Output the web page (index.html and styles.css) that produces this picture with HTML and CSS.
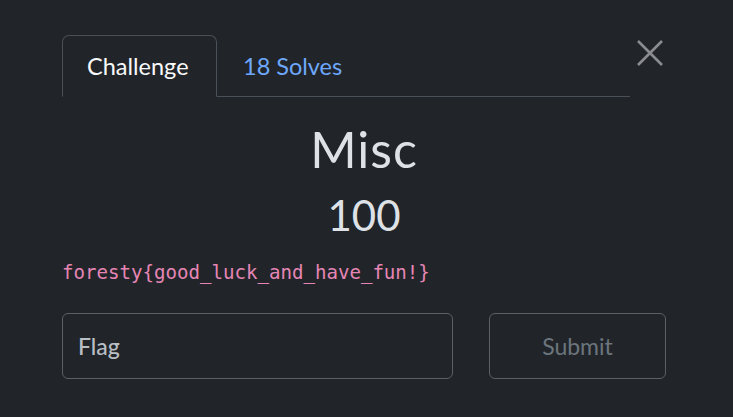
FILE: index.html
```html
<!DOCTYPE html>
<html>
<head>
<meta charset="utf-8">
<link rel="stylesheet" href="styles.css">
</head>
<body>
<div class="modal">
  <div class="header">
    <div class="tabs">
      <div class="tab active">Challenge</div>
      <div class="tab link">18 Solves</div>
    </div>
    <div class="close">
      <svg width="28" height="28" viewBox="0 0 28 28"><path d="M2 2 L26 26 M26 2 L2 26" stroke="#8a8c8f" stroke-width="2.6" fill="none"/></svg>
    </div>
  </div>
  <h1 class="name">Misc</h1>
  <div class="value">100</div>
  <div class="desc"><code>foresty{good_luck_and_have_fun!}</code></div>
  <div class="form">
    <div class="input">Flag</div>
    <div class="btn">Submit</div>
  </div>
</div>
</body>
</html>
```
FILE: styles.css
```css
html, body {
  margin: 0;
  padding: 0;
  background: #212529;
  height: 100%;
}
body {
  font-family: Lato, "Open Sans", sans-serif;
  color: #dee2e6;
}
.modal {
  width: 604px;
  padding: 35px 0 0 62px;
}
.header {
  display: flex;
  align-items: flex-start;
}
.tabs {
  display: flex;
  width: 568px;
  border-bottom: 1px solid #495057;
  height: 61px;
}
.tab {
  font-size: 23.5px;
  padding: 0 24px;
  display: flex;
  align-items: center;
  height: 61px;
  box-sizing: border-box;
}
.tab.active {
  border: 1px solid #495057;
  border-bottom: 1px solid #212529;
  border-radius: 7px 7px 0 0;
  color: #f8f9fa;
  height: 62px;
  width: 155px;
  padding-top: 0;
}
.tab.link {
  color: #6ea8fe;
  padding-left: 26px;
}
.close {
  margin-left: 4px;
  margin-top: 4px;
  width: 32px;
  display: flex;
  justify-content: center;
}
.name {
  font-size: 50px;
  font-weight: 400;
  margin: 22px 0 0;
  line-height: 60px;
  text-align: center;
  letter-spacing: 1px;
}
.value {
  font-size: 42px;
  line-height: 56px;
  text-align: center;
  margin-top: 8px;
}
.desc {
  margin-top: 18px;
  height: 30px;
}
code {
  font-family: "DejaVu Sans Mono", monospace;
  font-size: 19.1px;
  color: #e685b5;
}
.form {
  display: flex;
  gap: 36px;
  margin-top: 22px;
}
.input {
  width: 391px;
  height: 66px;
  box-sizing: border-box;
  border: 1px solid #5a6066;
  border-radius: 6px;
  font-size: 23px;
  color: #b8bec4;
  display: flex;
  align-items: center;
  padding-left: 15px;
  font-weight: 500;
}
.btn {
  width: 177px;
  height: 66px;
  box-sizing: border-box;
  border: 1px solid #5a6066;
  border-radius: 6px;
  font-size: 23px;
  color: #6c757d;
  display: flex;
  align-items: center;
  justify-content: center;
}
```
